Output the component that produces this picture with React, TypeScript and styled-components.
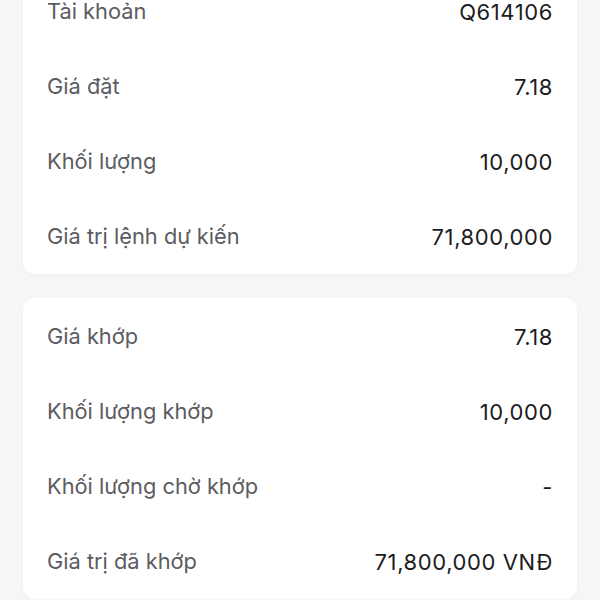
import React from "react";
import styled, { createGlobalStyle } from "styled-components";

const Global = createGlobalStyle`
  html, body {
    margin: 0;
    padding: 0;
    background: #f6f6f7;
    overflow: hidden;
  }
  body {
    font-family: Inter, "Noto Sans", "Liberation Sans", sans-serif;
    -webkit-font-smoothing: antialiased;
  }
`;

const Page = styled.div`
  display: flex;
  flex-direction: column;
  gap: 24px;
  padding: 0 23px 0 23px;
  margin-top: -27px;
  width: 600px;
  box-sizing: border-box;
`;

const Card = styled.section`
  background: #ffffff;
  border-radius: 12px;
  padding: 1px 24px 0;
  box-shadow: 0 1px 4px rgba(0, 0, 0, 0.03);
`;

const Row = styled.div`
  display: flex;
  align-items: center;
  justify-content: space-between;
  height: 75px;
`;

const Label = styled.span`
  font-size: 21.8px;
  line-height: 1;
  color: #5b5c62;
  font-weight: 400;
`;

const Value = styled.span`
  font-size: 22px;
  line-height: 1;
  letter-spacing: 0.6px;
  color: #1c1c1e;
  font-weight: 400;
`;

const order = [
  ["Tài khoản", "Q614106"],
  ["Giá đặt", "7.18"],
  ["Khối lượng", "10,000"],
  ["Giá trị lệnh dự kiến", "71,800,000"],
];

const match = [
  ["Giá khớp", "7.18"],
  ["Khối lượng khớp", "10,000"],
  ["Khối lượng chờ khớp", "-"],
  ["Giá trị đã khớp", "71,800,000 VNĐ"],
];

export default function App() {
  return (
    <>
      <Global />
      <Page>
        <Card>
          {order.map(([l, v]) => (
            <Row key={l}>
              <Label>{l}</Label>
              <Value>{v}</Value>
            </Row>
          ))}
        </Card>
        <Card>
          {match.map(([l, v]) => (
            <Row key={l}>
              <Label>{l}</Label>
              <Value>{v}</Value>
            </Row>
          ))}
        </Card>
      </Page>
    </>
  );
}
